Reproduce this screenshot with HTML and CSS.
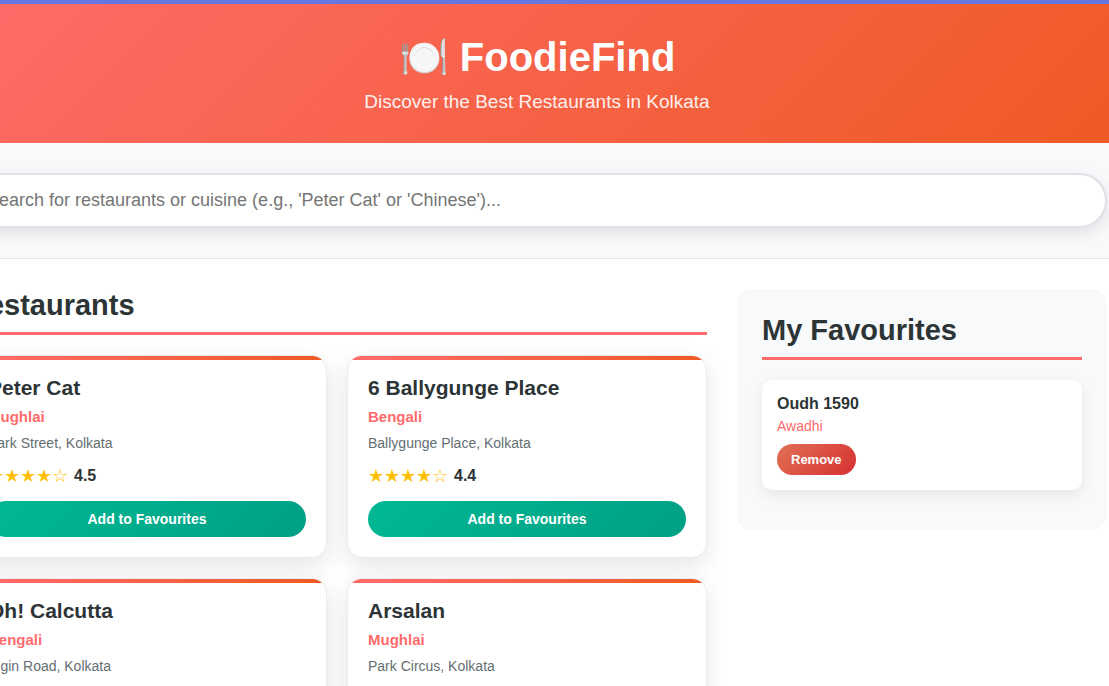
FILE: index.html
```html
<!DOCTYPE html>
<html lang="en">
<head>
<meta charset="utf-8">
<meta name="viewport" content="width=device-width, initial-scale=1">
<title>FoodieFind</title>
<link rel="stylesheet" href="styles.css">
</head>
<body>
<div class="container">
  <header class="header">
    <h1 class="title">🍽️ FoodieFind</h1>
    <p class="tagline">Discover the Best Restaurants in Kolkata</p>
  </header>
  <section class="search">
    <input class="search-input" type="text" aria-label="Search restaurants" placeholder="Search for restaurants or cuisine (e.g., 'Peter Cat' or 'Chinese')...">
  </section>
  <main class="main">
    <section>
      <h2 class="section-title">Restaurants</h2>
      <div class="grid">
        <article class="card">
          <h3 class="name">Peter Cat</h3>
          <p class="cuisine">Mughlai</p>
          <p class="address">Park Street, Kolkata</p>
          <div class="rating"><span class="stars">★★★★☆</span><span class="score">4.5</span></div>
          <button class="add" type="button">Add to Favourites</button>
        </article>
        <article class="card">
          <h3 class="name">6 Ballygunge Place</h3>
          <p class="cuisine">Bengali</p>
          <p class="address">Ballygunge Place, Kolkata</p>
          <div class="rating"><span class="stars">★★★★☆</span><span class="score">4.4</span></div>
          <button class="add" type="button">Add to Favourites</button>
        </article>
        <article class="card">
          <h3 class="name">Oh! Calcutta</h3>
          <p class="cuisine">Bengali</p>
          <p class="address">Elgin Road, Kolkata</p>
        </article>
        <article class="card">
          <h3 class="name">Arsalan</h3>
          <p class="cuisine">Mughlai</p>
          <p class="address">Park Circus, Kolkata</p>
        </article>
      </div>
    </section>
    <aside class="favourites">
      <h2 class="section-title">My Favourites</h2>
      <div class="fav">
        <h4 class="fav-name">Oudh 1590</h4>
        <p class="fav-cuisine">Awadhi</p>
        <button class="remove" type="button">Remove</button>
      </div>
    </aside>
  </main>
</div>
</body>
</html>
```

FILE: styles.css
```css
* {
  box-sizing: border-box;
  margin: 0;
  padding: 0;
}

body {
  padding-top: 4px;
  min-height: 100vh;
  overflow: hidden;
  background: #6777e2;
  color: #2d3436;
  font-family: "Liberation Sans", Arial, sans-serif;
}

/* The wide sheet runs past both window edges. */
.container {
  margin: 0 -28px 0 -63px;
  min-height: 100vh;
  background: #fff;
}

.header {
  padding: 30px;
  text-align: center;
  color: #fff;
  background:
    radial-gradient(circle at 50% 10%, rgba(255, 255, 255, 0.03) 1px, transparent 2px) 0 0 / 139px 139px,
    radial-gradient(circle at 25% 25%, rgba(255, 255, 255, 0.03) 1px, transparent 2px) 0 0 / 139px 139px,
    radial-gradient(circle at 75% 75%, rgba(255, 255, 255, 0.03) 1px, transparent 2px) 0 0 / 139px 139px,
    linear-gradient(135deg, #ff6b6b, #ee5a24);
}

.title {
  margin-bottom: 10px;
  font-size: 40px;
  line-height: 47px;
}

.tagline {
  font-size: 19px;
  line-height: 22px;
  opacity: 0.9;
}

.search {
  padding: 30px;
  background: #f8f9fb;
  border-bottom: 1px solid #e4e9ee;
}

.search-input {
  display: block;
  width: 100%;
  padding: 15px 18px;
  border: 2px solid #dfe1e6;
  border-radius: 50px;
  background: #fff;
  box-shadow: 0 5px 15px rgba(0, 0, 0, 0.1);
  font-family: inherit;
  font-size: 18px;
  line-height: 21px;
}

.main {
  display: grid;
  grid-template-columns: 2fr 1fr;
  gap: 30px;
  align-items: start;
  padding: 30px;
}

.section-title {
  margin-bottom: 20px;
  padding-bottom: 10px;
  border-bottom: 3px solid #ff6b6b;
  font-size: 29px;
  line-height: 33px;
}

.grid {
  display: grid;
  grid-template-columns: 1fr 1fr;
  gap: 20px;
}

.card {
  position: relative;
  overflow: hidden;
  padding: 20px;
  border: 1px solid #e9ebee;
  border-radius: 15px;
  background: #fff;
  box-shadow: 0 8px 25px rgba(0, 0, 0, 0.1);
}

.card::before {
  content: "";
  position: absolute;
  top: 0;
  left: 0;
  right: 0;
  height: 4px;
  background: linear-gradient(90deg, #ff6b6b, #ee5a24);
}

.name {
  margin-bottom: 8px;
  font-size: 21px;
  line-height: 24px;
}

.cuisine {
  margin-bottom: 10px;
  color: #ff6b6b;
  font-size: 15px;
  font-weight: bold;
  line-height: 17px;
}

.address {
  margin-bottom: 15px;
  color: #636e72;
  font-size: 14px;
  line-height: 16px;
}

.rating {
  display: flex;
  align-items: center;
  gap: 6px;
  height: 20px;
  margin-bottom: 15px;
}

.stars {
  color: #ffc107;
  font-size: 18px;
  line-height: 20px;
}

.score {
  font-size: 16px;
  font-weight: bold;
}

.add,
.remove {
  border: 0;
  color: #fff;
  font-family: inherit;
  font-weight: bold;
  cursor: pointer;
}

.add {
  display: block;
  width: 100%;
  padding: 10px 20px;
  border-radius: 25px;
  background: linear-gradient(135deg, #00b894, #00a085);
  font-size: 14px;
  line-height: 16px;
}

.favourites {
  padding: 25px;
  border-radius: 15px;
  background: #f8f9fb;
}

.fav {
  margin-bottom: 15px;
  padding: 15px;
  border-radius: 10px;
  background: #fff;
  box-shadow: 0 5px 15px rgba(0, 0, 0, 0.08);
}

.fav-name {
  margin-bottom: 5px;
  font-size: 16px;
  line-height: 18px;
}

.fav-cuisine {
  margin-bottom: 10px;
  color: #ff6b6b;
  font-size: 14px;
  line-height: 16px;
}

.remove {
  display: block;
  padding: 8px 14px;
  border-radius: 20px;
  background: linear-gradient(135deg, #e17055, #d63031);
  font-size: 13px;
  line-height: 15px;
}
```
